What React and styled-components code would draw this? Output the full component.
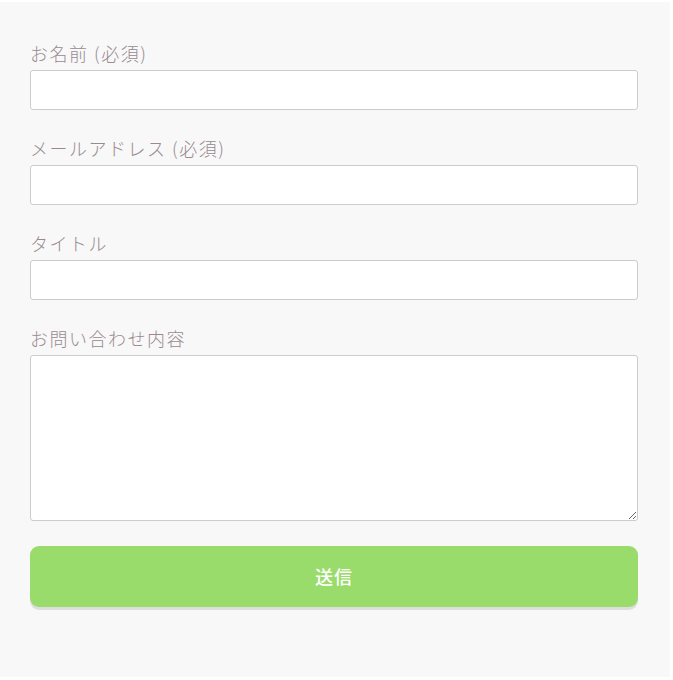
import React from "react";
import styled, { createGlobalStyle } from "styled-components";

const GlobalStyle = createGlobalStyle`
  html, body { margin: 0; padding: 0; background: #ffffff; }
  body { font-family: "Noto Sans CJK JP", "Noto Sans", sans-serif; }
`;

const Page = styled.div`
  padding-top: 2px;
`;

const Panel = styled.form`
  box-sizing: border-box;
  width: 670px;
  min-height: 675px;
  background: #f8f8f8;
  padding: 38px 32px 30px 30px;
  display: flex;
  flex-direction: column;
  gap: 25px;
`;

const Field = styled.div`
  display: flex;
  flex-direction: column;
  gap: 3px;
`;

const Label = styled.label`
  display: block;
  font-family: "Noto Sans CJK JP", sans-serif;
  font-weight: 300;
  font-size: 18px;
  line-height: 27px;
  letter-spacing: 1.5px;
  color: #9a8a90;
`;

const Input = styled.input`
  box-sizing: border-box;
  width: 100%;
  height: 40px;
  margin: 0;
  border: 1px solid #cccccc;
  border-radius: 3px;
  background: #ffffff;
  padding: 0 10px;
  font-size: 16px;
  font-family: inherit;
  outline: none;
`;

const TextArea = styled.textarea`
  box-sizing: border-box;
  display: block;
  width: 100%;
  height: 166px;
  margin: 0;
  border: 1px solid #cccccc;
  border-radius: 3px;
  background: #ffffff;
  padding: 8px 10px;
  font-size: 16px;
  font-family: inherit;
  outline: none;
  resize: vertical;
`;

const SubmitButton = styled.button`
  box-sizing: border-box;
  width: 100%;
  height: 61px;
  border: none;
  border-radius: 9px;
  background: #9adc6c;
  box-shadow: 0 3px 0 rgba(0, 0, 0, 0.1);
  color: #ffffff;
  font-family: "Noto Sans CJK JP", sans-serif;
  font-weight: 500;
  font-size: 18px;
  letter-spacing: 1px;
  padding: 0 0 2px;
  cursor: pointer;
`;

const fields = [
  { id: "name", label: "お名前 (必須)" },
  { id: "email", label: "メールアドレス (必須)" },
  { id: "title", label: "タイトル" },
];

export default function App() {
  return (
    <Page>
      <GlobalStyle />
      <Panel onSubmit={(e) => e.preventDefault()}>
        {fields.map((f) => (
          <Field key={f.id}>
            <Label htmlFor={f.id}>{f.label}</Label>
            <Input id={f.id} type="text" />
          </Field>
        ))}
        <Field>
          <Label htmlFor="message">お問い合わせ内容</Label>
          <TextArea id="message" />
        </Field>
        <SubmitButton type="submit">送信</SubmitButton>
      </Panel>
    </Page>
  );
}
